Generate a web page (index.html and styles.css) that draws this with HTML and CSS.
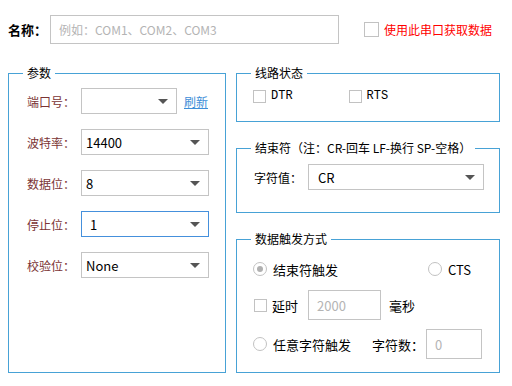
FILE: index.html
```html
<!DOCTYPE html>
<html lang="zh">
<head>
    <meta charset="UTF-8">
    <title>串口设置</title>
    <link rel="stylesheet" href="styles.css">
</head>
<body>
    <div class="page">
        <div class="top-row">
            <span class="name-label">名称：</span>
            <div class="text-input name-input"><span class="placeholder">例如：COM1、COM2、COM3</span></div>
            <span class="check use-port"><span class="box"></span><span class="red">使用此串口获取数据</span></span>
        </div>

        <div class="main">
            <fieldset class="group params">
                <legend>参数</legend>
                <div class="group-body">
                    <div class="form-row">
                        <span class="label">端口号：</span>
                        <div class="combo short"><span></span><i class="arrow"></i></div>
                        <a class="link">刷新</a>
                    </div>
                    <div class="form-row">
                        <span class="label">波特率：</span>
                        <div class="combo"><span>14400</span><i class="arrow"></i></div>
                    </div>
                    <div class="form-row">
                        <span class="label">数据位：</span>
                        <div class="combo"><span>8</span><i class="arrow"></i></div>
                    </div>
                    <div class="form-row">
                        <span class="label">停止位：</span>
                        <div class="combo focused"><span class="indent">1</span><i class="arrow"></i></div>
                    </div>
                    <div class="form-row">
                        <span class="label">校验位：</span>
                        <div class="combo"><span>None</span><i class="arrow"></i></div>
                    </div>
                </div>
            </fieldset>

            <div class="right-col">
                <fieldset class="group line-state">
                    <legend>线路状态</legend>
                    <div class="group-body checks">
                        <span class="check"><span class="box"></span><span class="mono">DTR</span></span>
                        <span class="check rts"><span class="box"></span><span class="mono">RTS</span></span>
                    </div>
                </fieldset>

                <fieldset class="group end-char">
                    <legend>结束符（注：CR-回车 LF-换行 SP-空格）</legend>
                    <div class="group-body end-row">
                        <span class="plain-label">字符值：</span>
                        <div class="combo wide"><span>CR</span><i class="arrow"></i></div>
                    </div>
                </fieldset>

                <fieldset class="group trigger">
                    <legend>数据触发方式</legend>
                    <div class="group-body">
                        <div class="trig-row first">
                            <span class="radio checked"><span class="dot"></span>结束符触发</span>
                            <span class="radio cts"><span class="dot"></span>CTS</span>
                        </div>
                        <div class="trig-row">
                            <span class="check delay"><span class="box"></span>延时</span>
                            <div class="text-input small"><span class="placeholder">2000</span></div>
                            <span class="unit">毫秒</span>
                        </div>
                        <div class="trig-row">
                            <span class="radio"><span class="dot"></span>任意字符触发</span>
                            <span class="count-label">字符数：</span>
                            <div class="text-input tiny"><span class="placeholder">0</span></div>
                        </div>
                    </div>
                </fieldset>
            </div>
        </div>
    </div>
</body>
</html>
```

FILE: styles.css
```css
body {
    margin: 0;
    background-color: #fff;
    font-family: "Noto Sans CJK SC", "Liberation Sans", sans-serif;
    font-size: 12px;
    color: #000;
}
.page {
    padding: 15px 8px 0 8px;
}
.top-row {
    display: flex;
    align-items: center;
    height: 28px;
}
.name-label {
    width: 42px;
    font-weight: bold;
    font-size: 13px;
}
.text-input {
    box-sizing: border-box;
    border: 1px solid #c4c4c4;
    display: flex;
    align-items: center;
    padding-left: 8px;
    background-color: #fff;
}
.placeholder {
    color: #b4b4b4;
}
.name-input {
    width: 289px;
    height: 29px;
}
.check {
    display: flex;
    align-items: center;
}
.box {
    box-sizing: border-box;
    width: 13px;
    height: 13px;
    border: 1px solid #c2c2c2;
    background-color: #fff;
    margin-right: 5px;
}
.use-port {
    margin-left: 25px;
}
.use-port .box {
    width: 15px;
    height: 15px;
}
.red {
    color: #ff0000;
}
.main {
    display: flex;
    margin-top: 22px;
}
.group {
    box-sizing: border-box;
    border: 1px solid #48a2d6;
    margin: 0;
    padding: 0;
    min-width: 0;
}
.group legend {
    padding: 0 4px;
    margin-left: 14px;
    line-height: 16px;
    height: 16px;
}
.params {
    width: 218px;
    height: 308px;
}
.params .group-body {
    padding: 7px 0 0 18px;
}
.form-row {
    display: flex;
    align-items: center;
    height: 26px;
    margin-bottom: 15px;
}
.label {
    width: 54px;
    color: #7b3434;
}
.combo {
    box-sizing: border-box;
    width: 128px;
    height: 26px;
    border: 1px solid #c4c4c4;
    display: flex;
    align-items: center;
    justify-content: space-between;
    padding: 0 8px 0 4px;
    font-size: 13px;
}
.combo.short {
    width: 96px;
}
.combo.wide {
    width: 176px;
    padding-left: 9px;
}
.combo.focused {
    border-color: #4590dc;
}
.indent {
    padding-left: 4px;
}
.arrow {
    width: 0;
    height: 0;
    border-left: 5px solid transparent;
    border-right: 5px solid transparent;
    border-top: 5px solid #555;
}
.link {
    margin-left: 7px;
    color: #3d8ed8;
    text-decoration: underline;
}
.right-col {
    margin-left: 10px;
    width: 264px;
    display: flex;
    flex-direction: column;
    gap: 18px;
}
.line-state {
    height: 57px;
}
.checks {
    display: flex;
    align-items: center;
    height: 14px;
    padding: 8px 0 0 16px;
}
.mono {
    font-family: "Liberation Mono", monospace;
    font-size: 12px;
}
.rts {
    margin-left: 56px;
}
.end-char {
    height: 73px;
}
.end-row {
    display: flex;
    align-items: center;
    height: 26px;
    padding: 8px 0 0 17px;
}
.plain-label {
    width: 54px;
}
.trigger {
    height: 142px;
}
.trigger .group-body {
    padding: 12px 0 0 16px;
}
.trig-row {
    display: flex;
    align-items: center;
    height: 30px;
    margin-bottom: 9px;
    font-size: 13px;
}
.trig-row.first {
    height: 20px;
    margin-bottom: 11px;
}
.radio {
    display: flex;
    align-items: center;
}
.radio .dot {
    box-sizing: border-box;
    width: 14px;
    height: 14px;
    border: 1px solid #c2c2c2;
    border-radius: 50%;
    margin-right: 6px;
    position: relative;
}
.radio.checked .dot::after {
    content: "";
    position: absolute;
    left: 3px;
    top: 3px;
    width: 6px;
    height: 6px;
    border-radius: 50%;
    background-color: #b0b0b0;
}
.cts {
    margin-left: 90px;
}
.delay .box {
    margin-left: 1px;
}
.small {
    width: 73px;
    height: 30px;
    margin-left: 10px;
}
.unit {
    margin-left: 8px;
}
.count-label {
    margin-left: 21px;
    width: 54px;
}
.tiny {
    width: 56px;
    height: 30px;
}
```
